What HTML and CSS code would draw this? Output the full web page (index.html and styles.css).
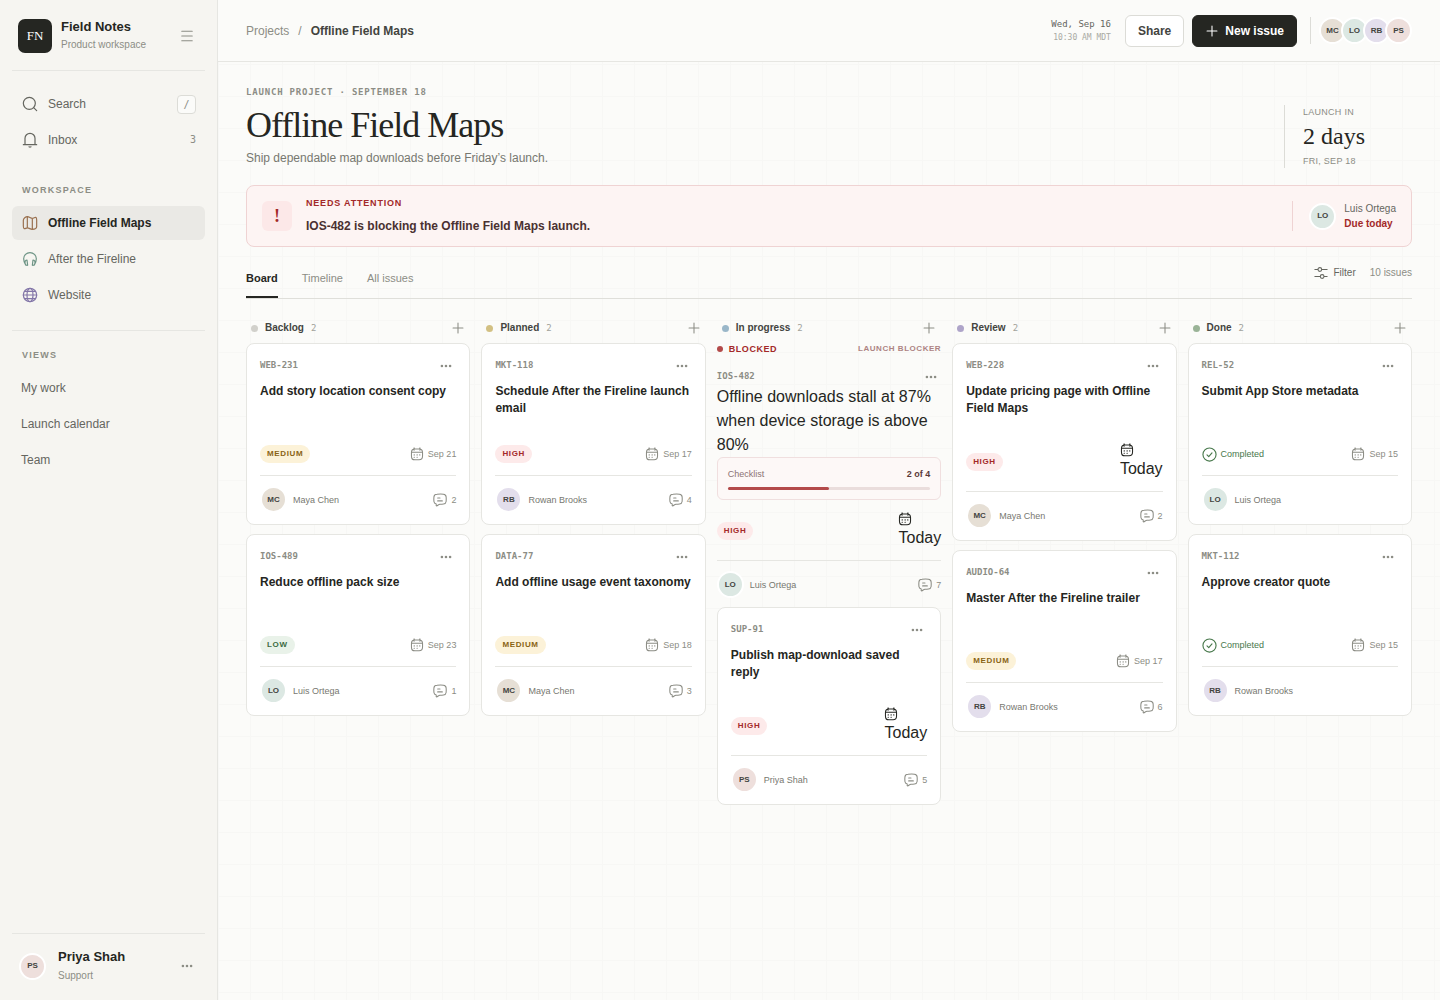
FILE: index.html
```html
<!DOCTYPE html>
<html lang="en">
<head>
<meta charset="utf-8">
<meta name="viewport" content="width=device-width, initial-scale=1">
<title>Offline Field Maps · Field Notes</title>
<link rel="stylesheet" href="styles.css">
</head>
<body>
<svg class="sprite" aria-hidden="true">
  <symbol id="i-search" viewBox="0 0 24 24"><circle cx="11" cy="11" r="9"/><path d="M17.5 17.5 22 22"/></symbol>
  <symbol id="i-bell" viewBox="0 0 24 24"><path d="M4.500 19V9.500a7.500 7.500 0 0 1 15 0V19M2 19h20M10.500 22.200c.8.500 2.200.5 3 0"/></symbol>
  <symbol id="i-map" viewBox="0 0 24 24"><path d="M2 8v8.500c0 2.300 0 3.600 1.300 4 1.500.4 2.900-1.200 4.900-1.200 2.600 0 4.400 2.200 7 2.200 2.900 0 6.800-1.200 6.800-4.200V7.500c0-2.300 0-3.600-1.300-4-1.500-.4-3.100 1.500-5.200 1.500-2.600 0-4.700-2.500-7.300-2.500S2 4.700 2 8ZM8 2.500v16.800M15.500 5v16.500"/></symbol>
  <symbol id="i-headphones" viewBox="0 0 24 24"><path d="M5.500 21C3.800 18.300 2.500 15 2.500 11.800a9.500 9.500 0 0 1 19 0c0 3.200-1.300 6.500-3 9.200M7.500 13.500c-2 .2-3.300 2-3 4l.2 1.300c.3 1.900 1.900 3 3.800 2.600ZM16.500 13.500c2 .2 3.300 2 3 4l-.2 1.300c-.3 1.900-1.900 3-3.800 2.600Z"/></symbol>
  <symbol id="i-globe" viewBox="0 0 24 24"><circle cx="12" cy="12" r="10"/><ellipse cx="12" cy="12" rx="4.500" ry="10"/><path d="M2 12h20M4 6.500h16M4 17.500h16"/></symbol>
  <symbol id="i-menu" viewBox="0 0 24 24"><path d="M3 4h18M3 12h18M3 20h18"/></symbol>
  <symbol id="i-plus" viewBox="0 0 24 24"><path d="M12 3.500v17M3.500 12h17"/></symbol>
  <symbol id="i-dots" viewBox="0 0 24 24"><g fill="currentColor" stroke="none"><circle cx="5" cy="12" r="2.200"/><circle cx="12" cy="12" r="2.200"/><circle cx="19" cy="12" r="2.200"/></g></symbol>
  <symbol id="i-filter" viewBox="0 0 24 24"><path d="M1.500 6h5M13.500 6h9M1.500 18H10M17.500 18h5"/><circle cx="10" cy="6" r="3.200"/><circle cx="14" cy="18" r="3.200"/></symbol>
  <symbol id="i-calendar" viewBox="0 0 24 24"><path d="M7 1.500v4M17 1.500v4M3 9h18M8.500 3.500h7c4.500 0 6 1.500 6 6v6c0 5-1.500 6.500-6 6.500h-7c-4.500 0-6-1.500-6-6.500v-6c0-4.500 1.500-6 6-6ZM7 13.500h.5M12 13.500h.5M16.500 13.500h.5M7 17.500h.5M12 17.500h.5"/></symbol>
  <symbol id="i-comment" viewBox="0 0 24 24"><path d="M7 2.300C11 1.700 14 1.700 18 2.100c2.700.3 4.300 2 4.500 4.500.3 3 .3 5.500 0 8-.3 2.600-1.900 4-4.500 4.300-2.300.3-4.200.3-6 .3-2 .2-3.700 1.900-5.300 2.700-.8.4-1.400 0-1.300-.8l.2-2.300c-2.500-.5-3.800-1.800-4-4.200-.3-3-.3-5.500 0-8 .2-2.500 1.900-4.100 5.400-4.300ZM8 8.500h4M8 13.500h8"/></symbol>
  <symbol id="i-check" viewBox="0 0 24 24"><circle cx="12" cy="12" r="10.500"/><path d="m8 12.500 2.800 2.800L16 9.500"/></symbol>
</svg>

<div class="app">
  <aside class="sidebar">
    <div class="brand">
      <span class="brand-mark">FN</span>
      <div class="brand-text"><strong>Field Notes</strong><span>Product workspace</span></div>
      <button class="icon-btn" aria-label="Toggle menu"><svg class="icon sm"><use href="#i-menu"/></svg></button>
    </div>
    <nav class="nav nav-main" aria-label="Main">
      <a class="nav-item" href="#search"><svg class="icon lg"><use href="#i-search"/></svg>Search<kbd>/</kbd></a>
      <a class="nav-item" href="#inbox"><svg class="icon lg"><use href="#i-bell"/></svg>Inbox<span class="badge">3</span></a>
    </nav>
    <h2 class="nav-label">Workspace</h2>
    <nav class="nav" aria-label="Workspace">
      <a class="nav-item active" href="#maps"><svg class="icon lg brown"><use href="#i-map"/></svg>Offline Field Maps</a>
      <a class="nav-item" href="#fireline"><svg class="icon lg green"><use href="#i-headphones"/></svg>After the Fireline</a>
      <a class="nav-item" href="#website"><svg class="icon lg violet"><use href="#i-globe"/></svg>Website</a>
    </nav>
    <div class="views">
      <h2 class="nav-label">Views</h2>
      <nav class="nav" aria-label="Views">
        <a class="nav-item plain" href="#my-work">My work</a>
        <a class="nav-item plain" href="#calendar">Launch calendar</a>
        <a class="nav-item plain" href="#team">Team</a>
      </nav>
    </div>
    <div class="account">
      <span class="avatar ps">PS</span>
      <div class="account-text"><strong>Priya Shah</strong><span>Support</span></div>
      <button class="icon-btn" aria-label="Account menu"><svg class="icon sm"><use href="#i-dots"/></svg></button>
    </div>
  </aside>

  <main class="main">
    <header class="topbar">
      <nav class="crumbs" aria-label="Breadcrumb"><a href="#projects">Projects</a><span>/</span><strong>Offline Field Maps</strong></nav>
      <div class="actions">
        <time class="clock"><span>Wed, Sep 16</span><small>10:30 AM MDT</small></time>
        <button class="btn">Share</button>
        <button class="btn primary"><svg class="icon sm"><use href="#i-plus"/></svg>New issue</button>
        <div class="team"><span class="avatar mc">MC</span><span class="avatar lo">LO</span><span class="avatar rb">RB</span><span class="avatar ps">PS</span></div>
      </div>
    </header>

    <div class="content">
      <section class="hero">
        <div>
          <p class="eyebrow">Launch project · September 18</p>
          <h1>Offline Field Maps</h1>
          <p class="lede">Ship dependable map downloads before Friday’s launch.</p>
        </div>
        <div class="countdown"><span>Launch in</span><strong>2 days</strong><span>Fri, Sep 18</span></div>
      </section>

      <section class="alert">
        <span class="alert-mark">!</span>
        <div class="alert-text"><span>Needs attention</span><strong>IOS-482 is blocking the Offline Field Maps launch.</strong></div>
        <div class="alert-owner"><span class="avatar lo">LO</span><div><span>Luis Ortega</span><strong>Due today</strong></div></div>
      </section>

      <div class="toolbar">
        <nav class="tabs" aria-label="Project views"><a class="current" href="#board">Board</a><a href="#timeline">Timeline</a><a href="#issues">All issues</a></nav>
        <div class="tools"><button class="filter"><svg class="icon sm"><use href="#i-filter"/></svg>Filter</button><span>10 issues</span></div>
      </div>

      <div class="board">
        <section class="column">
          <header class="column-head"><i class="dot gray"></i><h2>Backlog</h2><span>2</span><button class="icon-btn" aria-label="Add to Backlog"><svg class="icon sm"><use href="#i-plus"/></svg></button></header>
          <article class="card">
            <div class="card-top"><span>WEB-231</span><button class="icon-btn" aria-label="Issue menu"><svg class="icon sm"><use href="#i-dots"/></svg></button></div>
            <h3>Add story location consent copy</h3>
            <div class="meta"><span class="pill medium">Medium</span><span class="date"><svg class="icon sm"><use href="#i-calendar"/></svg>Sep 21</span></div>
            <footer><span class="avatar mc">MC</span><span>Maya Chen</span><span class="comments"><svg class="icon sm"><use href="#i-comment"/></svg>2</span></footer>
          </article>
          <article class="card">
            <div class="card-top"><span>IOS-489</span><button class="icon-btn" aria-label="Issue menu"><svg class="icon sm"><use href="#i-dots"/></svg></button></div>
            <h3>Reduce offline pack size</h3>
            <div class="meta"><span class="pill low">Low</span><span class="date"><svg class="icon sm"><use href="#i-calendar"/></svg>Sep 23</span></div>
            <footer><span class="avatar lo">LO</span><span>Luis Ortega</span><span class="comments"><svg class="icon sm"><use href="#i-comment"/></svg>1</span></footer>
          </article>
        </section>

        <section class="column">
          <header class="column-head"><i class="dot gold"></i><h2>Planned</h2><span>2</span><button class="icon-btn" aria-label="Add to Planned"><svg class="icon sm"><use href="#i-plus"/></svg></button></header>
          <article class="card">
            <div class="card-top"><span>MKT-118</span><button class="icon-btn" aria-label="Issue menu"><svg class="icon sm"><use href="#i-dots"/></svg></button></div>
            <h3>Schedule After the Fireline launch email</h3>
            <div class="meta"><span class="pill high">High</span><span class="date"><svg class="icon sm"><use href="#i-calendar"/></svg>Sep 17</span></div>
            <footer><span class="avatar rb">RB</span><span>Rowan Brooks</span><span class="comments"><svg class="icon sm"><use href="#i-comment"/></svg>4</span></footer>
          </article>
          <article class="card">
            <div class="card-top"><span>DATA-77</span><button class="icon-btn" aria-label="Issue menu"><svg class="icon sm"><use href="#i-dots"/></svg></button></div>
            <h3>Add offline usage event taxonomy</h3>
            <div class="meta"><span class="pill medium">Medium</span><span class="date"><svg class="icon sm"><use href="#i-calendar"/></svg>Sep 18</span></div>
            <footer><span class="avatar mc">MC</span><span>Maya Chen</span><span class="comments"><svg class="icon sm"><use href="#i-comment"/></svg>3</span></footer>
          </article>
        </section>

        <section class="column">
          <header class="column-head"><i class="dot blue"></i><h2>In progress</h2><span>2</span><button class="icon-btn" aria-label="Add to In progress"><svg class="icon sm"><use href="#i-plus"/></svg></button></header>
          <article class="blocked">
            <div class="blocked-status"><i class="dot red"></i><strong>Blocked</strong><span>Launch blocker</span></div>
            <div class="card-top"><span>IOS-482</span><button class="icon-btn" aria-label="Issue menu"><svg class="icon sm"><use href="#i-dots"/></svg></button></div>
            <h3>Offline downloads stall at 87% when device storage is above 80%</h3>
            <div class="checklist">
              <div><span>Checklist</span><strong>2 of 4</strong></div>
              <div class="track"><div class="fill" style="width: 50%"></div></div>
            </div>
            <div class="meta"><span class="pill high">High</span><span class="today"><svg class="icon sm"><use href="#i-calendar"/></svg>Today</span></div>
            <footer><span class="avatar lo">LO</span><span>Luis Ortega</span><span class="comments"><svg class="icon sm"><use href="#i-comment"/></svg>7</span></footer>
          </article>
          <article class="card">
            <div class="card-top"><span>SUP-91</span><button class="icon-btn" aria-label="Issue menu"><svg class="icon sm"><use href="#i-dots"/></svg></button></div>
            <h3>Publish map-download saved reply</h3>
            <div class="meta"><span class="pill high">High</span><span class="today"><svg class="icon sm"><use href="#i-calendar"/></svg>Today</span></div>
            <footer><span class="avatar ps">PS</span><span>Priya Shah</span><span class="comments"><svg class="icon sm"><use href="#i-comment"/></svg>5</span></footer>
          </article>
        </section>

        <section class="column">
          <header class="column-head"><i class="dot purple"></i><h2>Review</h2><span>2</span><button class="icon-btn" aria-label="Add to Review"><svg class="icon sm"><use href="#i-plus"/></svg></button></header>
          <article class="card">
            <div class="card-top"><span>WEB-228</span><button class="icon-btn" aria-label="Issue menu"><svg class="icon sm"><use href="#i-dots"/></svg></button></div>
            <h3>Update pricing page with Offline Field Maps</h3>
            <div class="meta"><span class="pill high">High</span><span class="today"><svg class="icon sm"><use href="#i-calendar"/></svg>Today</span></div>
            <footer><span class="avatar mc">MC</span><span>Maya Chen</span><span class="comments"><svg class="icon sm"><use href="#i-comment"/></svg>2</span></footer>
          </article>
          <article class="card">
            <div class="card-top"><span>AUDIO-64</span><button class="icon-btn" aria-label="Issue menu"><svg class="icon sm"><use href="#i-dots"/></svg></button></div>
            <h3>Master After the Fireline trailer</h3>
            <div class="meta"><span class="pill medium">Medium</span><span class="date"><svg class="icon sm"><use href="#i-calendar"/></svg>Sep 17</span></div>
            <footer><span class="avatar rb">RB</span><span>Rowan Brooks</span><span class="comments"><svg class="icon sm"><use href="#i-comment"/></svg>6</span></footer>
          </article>
        </section>

        <section class="column">
          <header class="column-head"><i class="dot sage"></i><h2>Done</h2><span>2</span><button class="icon-btn" aria-label="Add to Done"><svg class="icon sm"><use href="#i-plus"/></svg></button></header>
          <article class="card">
            <div class="card-top"><span>REL-52</span><button class="icon-btn" aria-label="Issue menu"><svg class="icon sm"><use href="#i-dots"/></svg></button></div>
            <h3>Submit App Store metadata</h3>
            <div class="meta"><span class="completed"><svg class="icon md"><use href="#i-check"/></svg>Completed</span><span class="date"><svg class="icon sm"><use href="#i-calendar"/></svg>Sep 15</span></div>
            <footer><span class="avatar lo">LO</span><span>Luis Ortega</span></footer>
          </article>
          <article class="card">
            <div class="card-top"><span>MKT-112</span><button class="icon-btn" aria-label="Issue menu"><svg class="icon sm"><use href="#i-dots"/></svg></button></div>
            <h3>Approve creator quote</h3>
            <div class="meta"><span class="completed"><svg class="icon md"><use href="#i-check"/></svg>Completed</span><span class="date"><svg class="icon sm"><use href="#i-calendar"/></svg>Sep 15</span></div>
            <footer><span class="avatar rb">RB</span><span>Rowan Brooks</span></footer>
          </article>
        </section>
      </div>
    </div>
  </main>
</div>
</body>
</html>
```
FILE: styles.css
```css
:root {
  --ink: #252622;
  --text: #43443f;
  --muted: #65665f;
  --faint: #8c8d85;
  --line: #e6e6e2;
  --red: #a32929;
  --sans: "Helvetica Neue", "Liberation Sans", Arial, sans-serif;
  --serif: Georgia, "Liberation Serif", serif;
  --mono: "DejaVu Sans Mono", monospace;
}

* { box-sizing: border-box; }
body { margin: 0; background: #fbfbf9; color: var(--ink); font: 12px/16px var(--sans); }
h1, h2, h3, p { margin: 0; }
a { color: inherit; text-decoration: none; }
button { font: inherit; color: inherit; cursor: pointer; }
.sprite { display: none; }

.icon { flex: none; display: block; fill: none; stroke: currentColor; stroke-width: 1.8; stroke-linecap: round; stroke-linejoin: round; }
.icon.sm { width: 14px; height: 14px; }
.icon.md { width: 15px; height: 15px; }
.icon.lg { width: 16px; height: 16px; }
.brown { color: #9a7150; }
.green { color: #6d9485; }
.violet { color: #8376a8; }
.icon-btn { display: grid; place-items: center; width: 24px; height: 24px; padding: 0; border: 0; background: none; color: var(--faint); }

.avatar { flex: none; display: grid; place-items: center; width: 27px; height: 27px; border: 2px solid #fff; border-radius: 50%; color: var(--text); font-size: 8px; font-weight: 700; line-height: 12px; }
.mc { background-color: #e6dfd5; }
.lo { background-color: #dce8e3; }
.rb { background-color: #e3deec; }
.ps { background-color: #eedfdc; }

.app { display: grid; grid-template-columns: 218px minmax(0, 1fr); min-height: 100vh; }

/* Sidebar */
.sidebar { position: sticky; top: 0; display: flex; flex-direction: column; height: 100vh; padding: 0 12px; background: #f6f5f1; border-right: 1px solid var(--line); color: var(--muted); }
.brand { display: flex; align-items: center; gap: 9px; padding: 18px 6px 17px; border-bottom: 1px solid var(--line); }
.brand-mark { display: grid; place-items: center; width: 34px; height: 34px; border-radius: 7px; background: var(--ink); color: #fff; font: 13px/16px var(--serif); }
.brand-text, .account-text { flex: 1; display: grid; gap: 1px; }
.account-text { gap: 2px; }
.brand-text strong, .account-text strong { color: var(--ink); font-size: 13px; line-height: 18px; }
.brand-text span, .account-text span { color: var(--faint); font-size: 10px; line-height: 16px; }
.nav { display: grid; gap: 2px; }
.nav-main { margin: 16px 0 27px; }
.nav-item { display: flex; align-items: center; gap: 10px; height: 34px; padding: 0 9px 0 10px; border-radius: 6px; }
.nav-item.active { background: #eae9e5; color: var(--ink); font-weight: 700; }
.nav-item.plain { padding-left: 9px; }
.nav-label { margin: 0 10px 10px; color: var(--faint); font-size: 9px; line-height: 12px; letter-spacing: .14em; text-transform: uppercase; }
kbd { margin-left: auto; width: 19px; border: 1px solid #dcdcd7; border-radius: 4px; background: #fbfbf9; color: var(--faint); font: 10px/17px var(--mono); text-align: center; }
.badge { margin-left: auto; color: var(--faint); font: 10px/16px var(--mono); }
.views { margin-top: 18px; padding-top: 18px; border-top: 1px solid var(--line); }
.account { display: flex; align-items: center; gap: 12px; margin-top: auto; padding: 14px 6px 16px 7px; border-top: 1px solid var(--line); }

/* Top bar */
.main { min-width: 0; background: linear-gradient(#f7f7f5 1px, transparent 1px) 0 0 / 32px 32px, linear-gradient(90deg, #f7f7f5 1px, transparent 1px) 0 0 / 32px 32px; }
.topbar { display: flex; align-items: center; justify-content: space-between; height: 62px; padding: 0 28px; background: #fbfbf9; border-bottom: 1px solid var(--line); }
.crumbs { display: flex; gap: 9px; color: var(--faint); }
.crumbs strong { color: var(--text); }
.actions { display: flex; align-items: center; gap: 8px; }
.clock { display: grid; margin-right: 6px; color: var(--muted); font: 9px/14px var(--mono); text-align: right; }
.clock small { color: #a9aaa3; font-size: 8px; }
.btn { display: flex; align-items: center; gap: 6px; height: 32px; padding: 0 12px; border: 1px solid #dcdcd7; border-radius: 6px; background: #fff; color: var(--text); font-weight: 700; }
.btn.primary { border-color: var(--ink); background: var(--ink); color: #fff; }
.team { display: flex; margin-left: 5px; padding-left: 8px; border-left: 1px solid #dcdcd7; }
.team .avatar + .avatar { margin-left: -5px; }

/* Hero */
.content { padding: 24px 28px; }
.hero { display: flex; align-items: flex-end; justify-content: space-between; margin-bottom: 17px; }
.eyebrow { color: var(--faint); font: 700 9px/12px var(--mono); letter-spacing: .09em; text-transform: uppercase; }
h1 { margin: 7px 0 4px; font: 400 36px/40px var(--serif); letter-spacing: -1px; }
.lede { color: #777870; line-height: 19px; }
.countdown { display: grid; width: 128px; padding-left: 18px; border-left: 1px solid #dcdcd7; color: var(--faint); font-size: 9px; line-height: 14px; letter-spacing: .03em; text-transform: uppercase; }
.countdown strong { color: var(--ink); font: 400 24px/35px var(--serif); letter-spacing: 0; text-transform: none; }

/* Attention banner */
.alert { display: flex; align-items: center; gap: 14px; height: 62px; padding: 0 15px; border: 1px solid #efd3d3; border-radius: 8px; background: #fdf4f3; }
.alert-mark { display: grid; place-items: center; width: 30px; height: 30px; border-radius: 6px; background: #fce8e8; color: var(--red); font: 700 18px/20px var(--serif); }
.alert-text { flex: 1; display: grid; gap: 8px; }
.alert-text span { color: var(--red); font-size: 9px; font-weight: 700; line-height: 12px; letter-spacing: .09em; text-transform: uppercase; }
.alert-text strong { color: #4a3131; line-height: 18px; }
.alert-owner { display: flex; align-items: center; gap: 8px; height: 30px; padding-left: 16px; border-left: 1px solid #efd3d3; }
.alert-owner div { display: grid; color: var(--muted); font-size: 10px; line-height: 15px; }
.alert-owner strong { color: var(--red); }

/* Tabs */
.toolbar { display: flex; justify-content: space-between; height: 39px; margin: 13px 0 17px; border-bottom: 1px solid #dfdfda; }
.tabs { display: flex; gap: 24px; color: var(--faint); font-size: 11px; line-height: 36px; }
.tabs a { border-bottom: 2px solid transparent; }
.tabs .current { border-color: var(--ink); color: var(--ink); font-weight: 700; }
.tools { display: flex; align-items: center; gap: 14px; height: 26px; color: var(--faint); font-size: 10px; }
.filter { display: flex; align-items: center; gap: 6px; padding: 0; border: 0; background: none; color: var(--muted); }

/* Board */
.board { display: grid; grid-template-columns: repeat(5, minmax(0, 1fr)); gap: 11px; align-items: start; }
.column { display: grid; gap: 9px; }
.column-head { display: flex; align-items: center; height: 24px; margin-bottom: -6px; padding: 0 0 0 5px; }
.column-head h2 { margin: 0 7px; color: var(--text); font-size: 10px; }
.column-head span { color: #a1a29b; font: 9px/16px var(--mono); }
.column-head .icon-btn { margin-left: auto; }
.dot { width: 7px; height: 7px; border-radius: 50%; }
.gray { background: #d1d0cb; }
.gold { background: #d2c083; }
.blue { background: #9ab7c9; }
.purple { background: #aea4c9; }
.sage { background: #9ab397; }
.red { background: #b34a4a; }

.card { padding: 13px 13px 11px; border: 1px solid var(--line); border-radius: 8px; background: #fff; }
.card-top { display: flex; align-items: center; justify-content: space-between; height: 17px; color: var(--faint); font: 700 9px/17px var(--mono); }
.card-top .icon-btn { width: 20px; }
.card h3 { min-height: 34px; margin: 9px 0 26px; font-size: 12px; line-height: 17px; }
.meta { display: flex; align-items: center; justify-content: space-between; min-height: 22px; margin-bottom: 10px; }
.pill { padding: 0 7px; border-radius: 9px; font-size: 8px; font-weight: 700; line-height: 18px; letter-spacing: .08em; text-transform: uppercase; }
.medium { background: #fcf2d8; color: #8a6414; }
.high { background: #fdeaea; color: var(--red); }
.low { background: #e9f2e9; color: #3c6b42; }
.date, .comments { display: flex; align-items: center; gap: 4px; color: var(--faint); font-size: 9px; }
.today { font-size: 16px; line-height: 24px; }
.completed { display: flex; align-items: center; gap: 4px; color: #47784b; font-size: 9px; }
.card footer, .blocked footer { display: flex; align-items: center; gap: 6px; padding-top: 10px; border-top: 1px solid var(--line); color: #777870; font-size: 9px; }
.card footer .comments, .blocked footer .comments { margin-left: auto; }

.blocked-status { display: flex; align-items: center; gap: 6px; margin-bottom: 13px; font-size: 9px; line-height: 12px; letter-spacing: .06em; text-transform: uppercase; }
.blocked-status strong { color: var(--red); }
.blocked-status span { margin-left: auto; color: #ad8383; font-size: 8px; font-weight: 700; }
.blocked-status .dot { width: 6px; height: 6px; }
.blocked h3 { font-size: 16px; font-weight: 400; line-height: 24px; }
.checklist { margin-bottom: 12px; padding: 9px 10px; border: 1px solid #f0dfdf; border-radius: 6px; background: #fdf8f7; font-size: 9px; line-height: 14px; }
.checklist > div { display: flex; justify-content: space-between; color: #8c7373; }
.checklist strong { color: #5b3939; }
.checklist .track { height: 3px; margin-top: 6px; border-radius: 2px; background: #eadddc; }
.checklist .fill { background: #b34a4a; border-radius: 2px; }
```
